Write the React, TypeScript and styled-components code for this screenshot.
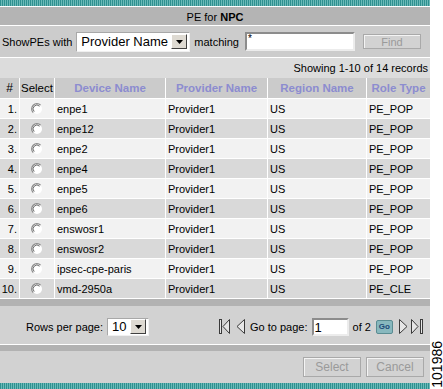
import React from 'react'
import styled, { createGlobalStyle } from 'styled-components'

interface IRecord {
  device: string
  provider: string
  region: string
  role: string
}

const records: IRecord[] = [
  { device: 'enpe1', provider: 'Provider1', region: 'US', role: 'PE_POP' },
  { device: 'enpe12', provider: 'Provider1', region: 'US', role: 'PE_POP' },
  { device: 'enpe2', provider: 'Provider1', region: 'US', role: 'PE_POP' },
  { device: 'enpe4', provider: 'Provider1', region: 'US', role: 'PE_POP' },
  { device: 'enpe5', provider: 'Provider1', region: 'US', role: 'PE_POP' },
  { device: 'enpe6', provider: 'Provider1', region: 'US', role: 'PE_POP' },
  { device: 'enswosr1', provider: 'Provider1', region: 'US', role: 'PE_POP' },
  { device: 'enswosr2', provider: 'Provider1', region: 'US', role: 'PE_POP' },
  { device: 'ipsec-cpe-paris', provider: 'Provider1', region: 'US', role: 'PE_POP' },
  { device: 'vmd-2950a', provider: 'Provider1', region: 'US', role: 'PE_CLE' }
]

const Radio = () => (
  <svg width='12' height='12' viewBox='0 0 12 12'>
    <circle cx='6' cy='6' r='5' fill='#fff' />
    <path d='M2.2 9.6 A5 5 0 0 1 9.6 2.2' stroke='#8a8a8a' strokeWidth='1.2' fill='none' />
    <path d='M3.2 8.6 A3.8 3.8 0 0 1 8.6 3.2' stroke='#5a5a5a' strokeWidth='0.9' fill='none' />
  </svg>
)

const NavIcon: React.FC<{ kind: 'first' | 'prev' | 'next' | 'last' }> = ({ kind }) => {
  const stroke = '#3a3a3a'
  if (kind === 'first') {
    return (
      <svg width='11' height='15' viewBox='0 0 11 15'>
        <rect x='0.5' y='0.5' width='2' height='14' fill='#e6e6e6' stroke={stroke} />
        <path d='M10.5 0.5 L4 7.5 L10.5 14.5 Z' fill='#e6e6e6' stroke={stroke} />
      </svg>
    )
  }
  if (kind === 'prev') {
    return (
      <svg width='9' height='15' viewBox='0 0 9 15'>
        <path d='M8.5 0.5 L1 7.5 L8.5 14.5 Z' fill='#e6e6e6' stroke={stroke} />
      </svg>
    )
  }
  if (kind === 'next') {
    return (
      <svg width='9' height='15' viewBox='0 0 9 15'>
        <path d='M0.5 0.5 L8 7.5 L0.5 14.5 Z' fill='#e6e6e6' stroke={stroke} />
      </svg>
    )
  }
  return (
    <svg width='13' height='15' viewBox='0 0 13 15'>
      <path d='M0.5 0.5 L7 7.5 L0.5 14.5 Z' fill='#e6e6e6' stroke={stroke} />
      <rect x='9.5' y='0.5' width='2' height='14' fill='#e6e6e6' stroke={stroke} />
    </svg>
  )
}

const DownArrow = () => (
  <svg width='7' height='4' viewBox='0 0 7 4'>
    <path d='M0 0 H7 L3.5 4 Z' fill='#000' />
  </svg>
)

const App: React.FC = () => {
  return (
    <Page>
      <GlobalStyle />
      <Panel>
        <Stripe />
        <TitleBar>
          PE for <b>NPC</b>
        </TitleBar>
        <FilterRow>
          <Label $left={2}>ShowPEs with</Label>
          <FakeSelect $left={4} $width={114}>
            <span>Provider Name</span>
            <ArrowBtn>
              <DownArrow />
            </ArrowBtn>
          </FakeSelect>
          <Label $left={4}>matching</Label>
          <TextBox $left={6} $width={110}>*</TextBox>
          <FlatButton $left={8} $width={58} $height={15}>
            Find
          </FlatButton>
        </FilterRow>
        <ShowingRow>Showing 1-10 of 14 records</ShowingRow>
        <Grid>
          <HeadCell $align='center'>#</HeadCell>
          <HeadCell $align='left' $small>Select</HeadCell>
          <HeadCell $align='center' $accent>Device Name</HeadCell>
          <HeadCell $align='center' $accent>Provider Name</HeadCell>
          <HeadCell $align='center' $accent>Region Name</HeadCell>
          <HeadCell $align='center' $accent>Role Type</HeadCell>
          {records.map((r, i) => (
            <React.Fragment key={r.device}>
              <Cell $odd={i % 2 === 1} $align='right'>{i + 1}.</Cell>
              <Cell $odd={i % 2 === 1} $align='center'>
                <Radio />
              </Cell>
              <Cell $odd={i % 2 === 1}>{r.device}</Cell>
              <Cell $odd={i % 2 === 1}>{r.provider}</Cell>
              <Cell $odd={i % 2 === 1}>{r.region}</Cell>
              <Cell $odd={i % 2 === 1}>{r.role}</Cell>
            </React.Fragment>
          ))}
        </Grid>
        <Divider $height={7} />
        <Pager>
          <Label $left={26}>Rows per page:</Label>
          <FakeSelect $left={4} $width={42} $height={18}>
            <span>10</span>
            <ArrowBtn>
              <DownArrow />
            </ArrowBtn>
          </FakeSelect>
          <NavSlot $left={70}>
            <NavIcon kind='first' />
          </NavSlot>
          <NavSlot $left={6}>
            <NavIcon kind='prev' />
          </NavSlot>
          <Label $left={5}>Go to page:</Label>
          <TextBox $left={4} $width={37} $height={18}>
            <PageNum>1</PageNum>
          </TextBox>
          <Label $left={4}>of 2</Label>
          <GoButton>Go</GoButton>
          <NavSlot $left={6}>
            <NavIcon kind='next' />
          </NavSlot>
          <NavSlot $left={3}>
            <NavIcon kind='last' />
          </NavSlot>
        </Pager>
        <Divider $height={6} />
        <Actions>
          <FlatButton $width={58} $height={20} $large>
            Select
          </FlatButton>
          <FlatButton $width={58} $height={20} $large>
            Cancel
          </FlatButton>
        </Actions>
        <Stripe />
      </Panel>
      <Side>
        <FigNo>101986</FigNo>
      </Side>
    </Page>
  )
}

export default App

const GlobalStyle = createGlobalStyle`
  body {
    margin: 0;
    background: #fff;
    font-family: 'Liberation Sans', Arial, sans-serif;
    font-size: 11px;
    color: #000;
  }
`

const Page = styled.div`
  display: flex;
  width: 443px;
  height: 389px;
  background: #fff;
`

const Panel = styled.div`
  width: 430px;
  display: flex;
  flex-direction: column;
`

const Stripe = styled.div`
  height: 6px;
  background: repeating-linear-gradient(90deg, #2f9090 0 1px, #6cbab8 1px 2px);
`

const TitleBar = styled.div`
  height: 18px;
  border-top: 1px solid #fff;
  background: #b4b4b4;
  text-align: center;
  line-height: 20px;
  & b {
    font-weight: bold;
  }
`

const FilterRow = styled.div`
  height: 31px;
  border-top: 1px solid #fff;
  background: #cccccc;
  display: flex;
  align-items: center;
`

const Label = styled.span<{ $left?: number }>`
  margin-left: ${(p) => p.$left || 0}px;
  white-space: nowrap;
`

const FakeSelect = styled.div<{ $left?: number; $width: number; $height?: number }>`
  margin-left: ${(p) => p.$left || 0}px;
  width: ${(p) => p.$width}px;
  height: ${(p) => p.$height || 20}px;
  box-sizing: border-box;
  background: #fff;
  border: 1px solid;
  border-color: #a8a8a8 #f0f0f0 #f0f0f0 #a8a8a8;
  display: flex;
  align-items: center;
  justify-content: space-between;
  padding: 0 2px 0 4px;
  font-size: 13px;
  line-height: 1;
`

const ArrowBtn = styled.div`
  width: 16px;
  height: 15px;
  box-sizing: border-box;
  background: #dedad2;
  border: 1px solid;
  border-color: #fff #404040 #404040 #fff;
  display: flex;
  align-items: center;
  justify-content: center;
`

const TextBox = styled.div<{ $left?: number; $width: number; $height?: number }>`
  margin-left: ${(p) => p.$left || 0}px;
  width: ${(p) => p.$width}px;
  height: ${(p) => p.$height || 19}px;
  box-sizing: border-box;
  background: #fff;
  border: 2px solid;
  border-color: #8c8c8c #ececec #ececec #8c8c8c;
  padding: 0 1px;
  font-size: 10px;
  line-height: 10px;
`

const PageNum = styled.span`
  font-size: 13px;
  line-height: 15px;
`

const FlatButton = styled.div<{ $left?: number; $width: number; $height: number; $large?: boolean }>`
  margin-left: ${(p) => p.$left || 0}px;
  width: ${(p) => p.$width}px;
  height: ${(p) => p.$height}px;
  box-sizing: border-box;
  background: #d2d2d2;
  border: 1px solid #a9a9a9;
  box-shadow: inset 1px 1px 0 #f4f4f4;
  color: #9a9a9a;
  font-size: ${(p) => (p.$large ? 12 : 11)}px;
  display: flex;
  align-items: center;
  justify-content: center;
`

const ShowingRow = styled.div`
  height: 20px;
  border-top: 1px solid #fff;
  background: #dcdcdc;
  text-align: right;
  padding-right: 2px;
  line-height: 20px;
`

const Grid = styled.div`
  display: grid;
  grid-template-columns: 19px 34px 110px 101px 98px 1fr;
  grid-template-rows: 20px;
  grid-auto-rows: 19px;
  gap: 1px;
  background: #fff;
`

const HeadCell = styled.div<{ $align: string; $accent?: boolean; $small?: boolean }>`
  background: #cbcbcb;
  text-align: ${(p) => p.$align};
  line-height: 20px;
  font-size: ${(p) => (p.$accent || p.$small ? 11.5 : 12)}px;
  font-weight: ${(p) => (p.$accent ? 'bold' : 'normal')};
  color: ${(p) => (p.$accent ? '#8c8cd0' : '#000')};
  padding-left: ${(p) => (p.$align === 'left' ? 1 : 0)}px;
  white-space: nowrap;
  overflow: hidden;
`

const Cell = styled.div<{ $odd: boolean; $align?: string }>`
  background: ${(p) => (p.$odd ? '#d9d9d9' : '#f2f2f2')};
  display: flex;
  align-items: center;
  justify-content: ${(p) =>
    p.$align === 'right' ? 'flex-end' : p.$align === 'center' ? 'center' : 'flex-start'};
  padding: 0 2px;
  white-space: nowrap;
`

const Divider = styled.div<{ $height: number }>`
  height: ${(p) => p.$height}px;
  border-top: 1px solid #fff;
  background: #b2b2b2;
`

const Pager = styled.div`
  height: 38px;
  box-sizing: border-box;
  padding-top: 3px;
  background: #d2d2d2;
  display: flex;
  align-items: center;
`

const NavSlot = styled.span<{ $left: number }>`
  margin-left: ${(p) => p.$left}px;
  display: flex;
`

const GoButton = styled.div`
  margin-left: 5px;
  width: 17px;
  height: 14px;
  box-sizing: border-box;
  background: #88b8be;
  border: 1px solid #5a8c92;
  border-radius: 2px;
  color: #1c4a78;
  font-size: 8px;
  font-weight: bold;
  display: flex;
  align-items: center;
  justify-content: center;
`

const Actions = styled.div`
  height: 32px;
  background: #d2d2d2;
  display: flex;
  align-items: center;
  justify-content: flex-end;
  gap: 5px;
  padding-right: 6px;
`

const Side = styled.div`
  width: 13px;
  display: flex;
  flex-direction: column;
  justify-content: flex-end;
  align-items: center;
  padding-bottom: 1px;
`

const FigNo = styled.div`
  writing-mode: vertical-rl;
  transform: rotate(180deg);
  font-size: 14px;
  line-height: 12px;
`
